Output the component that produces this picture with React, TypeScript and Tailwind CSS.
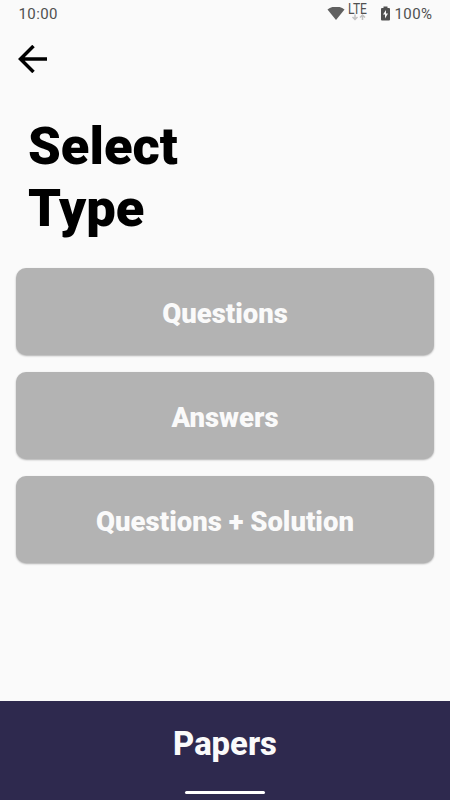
function Choice({ label }: { label: string }) {
  return (
    <button className="h-[87px] w-full rounded-[10px] bg-[#b3b3b3] pt-[4px] text-[27.500px] font-black leading-none text-[#fafafa] shadow-[0_1px_2px_rgba(0,0,0,0.3)]">
      {label}
    </button>
  );
}

export default function App() {
  return (
    <div className="flex h-[800px] w-[450px] flex-col overflow-hidden bg-[#fafafa] font-['Roboto',sans-serif] text-black">
      <header className="flex h-7 shrink-0 items-center justify-between pl-[18.500px] pr-[18px] text-[15px] tracking-[0.4px] text-[#505050]">
        <span>10:00</span>
        <div className="flex items-center">
          <svg width="18" height="15" viewBox="0 0 18 15" className="mr-[3px] -translate-x-px"><path d="M.5 2.500C5.500-1.500 12.500-1.500 17.500 2.500L9 13Z" fill="#606060" /></svg>
          <svg width="20" height="24" viewBox="0 0 20 24" className="mr-[13px] -translate-x-px overflow-visible">
            <text x="0" y="12" fontSize="14" fontWeight="400" textLength="19" lengthAdjust="spacingAndGlyphs" letterSpacing="0" fill="#505050">LTE</text>
            <path d="M7 12.500v5M4.500 15l2.500 2.500L9.500 15M14.500 18v-5M12 15.500L14.500 13l2.500 2.500" stroke="#c2c2c2" strokeWidth="1.500" fill="none" />
          </svg>
          <svg width="9" height="15" viewBox="0 0 9 15" className="mr-[4px] -translate-x-px -translate-y-px"><path fillRule="evenodd" d="M2.500 .5H6.500V2H8Q9 2 9 3V13.500Q9 14.500 8 14.500H1Q0 14.500 0 13.500V3Q0 2 1 2H2.500ZM5 4L2 8.500H4V12.500L7 7.500H5Z" fill="#505050" /></svg>
          <span className="-mr-[0.4px]">100%</span>
        </div>
      </header>
      <nav className="flex h-[62px] shrink-0 items-center pl-[18px]">
        <button aria-label="Back">
          <svg width="30" height="28" viewBox="0 0 30 28"><path d="M29 14H3M15.500 1L2.500 14l13 13" fill="none" stroke="#000" strokeWidth="3.500" /></svg>
        </button>
      </nav>
      <h1 className="mt-[25px] h-[153px] shrink-0 pl-7 text-[52.500px] font-black leading-[62px]">Select<br />Type</h1>
      <main className="flex flex-1 flex-col gap-[17.200px] px-4">
        <Choice label="Questions" />
        <Choice label="Answers" />
        <Choice label="Questions + Solution" />
      </main>
      <footer className="flex h-[99px] shrink-0 flex-col items-center bg-[#2e294e] pt-[24px] text-[32.800px] font-extrabold leading-[38px] text-[#fafafa]">
        <span>Papers</span>
        <div className="mt-[28px] h-[3px] w-[80px] rounded-full bg-white" />
      </footer>
    </div>
  );
}
